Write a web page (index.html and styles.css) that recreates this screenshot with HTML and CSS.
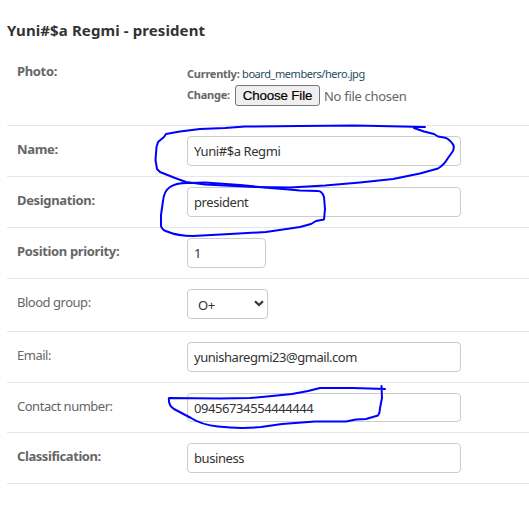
FILE: index.html
```html
<!DOCTYPE html>
<html lang="en">
<head>
<meta charset="utf-8">
<title>Board member</title>
<link rel="stylesheet" href="styles.css">
</head>
<body>
<main class="page">
  <h2 class="title">Yuni#$a Regmi - president</h2>
  <form class="form">
    <div class="row row-photo">
      <label class="label required">Photo:</label>
      <div class="upload">
        <div class="upload-current"><b>Currently:</b> <a class="link">board_members/hero.jpg</a></div>
        <div class="upload-change"><b>Change:</b><button type="button" class="file-button">Choose File</button><span class="file-name">No file chosen</span></div>
      </div>
    </div>
    <div class="row"><label class="label required">Name:</label><input class="field" value="Yuni#$a Regmi"></div>
    <div class="row"><label class="label required">Designation:</label><input class="field" value="president"></div>
    <div class="row"><label class="label required">Position priority:</label><input class="field field-small" value="1"></div>
    <div class="row row-select"><label class="label">Blood group:</label>
      <div class="field select"><span>O+</span><svg class="chevron" width="10" height="7" viewBox="0 0 10 7"><path d="M1 1.2 5 5 9 1.2"/></svg></div>
    </div>
    <div class="row"><label class="label">Email:</label><input class="field field-email" value="yunisharegmi23@gmail.com"></div>
    <div class="row row-contact"><label class="label">Contact number:</label><input class="field field-contact" value="09456734554444444"></div>
    <div class="row"><label class="label required classification">Classification:</label><input class="field" value="business"></div>
  </form>
  <svg class="marks" width="529" height="510" viewBox="0 0 529 510">
    <path d="M425 127 L355 125.5 L300 126 L245 126.5 L225 128 L200 129 L180 131.5 L166 134 L164 137 L158 142 L156.500 147 L155.500 160 L157 169 L160 172 L175 178 L186 182 L205 184.500 L255 187 L290 187.500 L325 185.500 L360 182.500 L393 179 L420 173.500 L438 168.500 Q444 165 448 158 L453 151 Q455 146 452 143 Q448 138 444 137.500 L438 136.500 L434 134 L424 131.500 L414 128"/>
    <path d="M190 183 Q176 182.500 170 187 Q164 191 163 201 L161 215 L161 226 Q162 230 167 231.500 Q178 236 193 236 L230 234 L266 232 L300 227 L311 224 L316 221 L324 219.500 L325 209 L324 197 Q322 191 318 191 L300 190.500 L283 189 L270 188 L240 185 L205 182.500 L190 183"/>
    <path d="M385 389 L353 388 L320 388 L308 391 L292 394 L272 396 L250 398 L220 398.500 L169 398 Q168 405 174 409 L191 418 Q202 425 218 426.500 Q240 429 261 427 L282 424 L315 421.500 L346 421.500 L356 419.500 L366 419 L378 415.500 Q380 413 380 408 L382 398 L381.500 386"/>
  </svg>
</main>
</body>
</html>
```
FILE: styles.css
```css
* { box-sizing: border-box; }
body { margin: 0; background: #fff; color: #333; font-family: "Noto Sans", "Open Sans", sans-serif; }
.page { position: relative; width: 529px; height: 510px; overflow: hidden; padding: 20px 0 0 7px; }
.title { margin: 0; height: 31px; font-size: 15px; line-height: 21px; font-weight: 700; letter-spacing: 0.1px; white-space: nowrap; }
.form { margin: 0; }
.row { display: flex; align-items: flex-start; height: 51px; padding: 10px 0 0 10px; border-bottom: 1px solid #e6e6e6; }
.row-photo { height: 75px; }
.row-select { height: 53px; }
.row-contact { height: 50px; }
.label { width: 170px; padding-top: 4px; font-size: 13px; line-height: 18px; letter-spacing: -0.48px; color: #666; white-space: nowrap; }
.row-photo .label { padding-top: 1px; }
.required { font-weight: 700; letter-spacing: -0.35px; }
.classification { letter-spacing: -0.42px; }
.field { width: 274px; height: 30px; margin: 0; padding: 0 6px; border: 1px solid #ccc; border-radius: 4px; background: #fff; color: #333; font: 13px "Noto Sans", sans-serif; letter-spacing: -0.42px; }
.field-small { width: 79px; }
.field-email { letter-spacing: -0.46px; }
.field-contact { height: 29px; }
.select { display: flex; align-items: center; justify-content: space-between; width: 81px; padding: 2px 3px 0 10px; }
.chevron { margin-top: -3px; fill: none; stroke: #333; stroke-width: 2.2; }
.upload { padding-top: 4px; font-size: 11px; line-height: 17px; color: #666; white-space: nowrap; }
.upload-current { letter-spacing: -0.25px; }
.link { color: #264b5d; letter-spacing: -0.45px; }
.upload-change { display: flex; margin-top: 3px; letter-spacing: -0.25px; }
.upload-change b { width: 48px; padding-top: 1px; }
.file-button { width: 85px; height: 21px; padding: 0; border: 1px solid #767676; border-radius: 3px; background: #efefef; color: #000; font: 13.333px "Liberation Sans", sans-serif; letter-spacing: -0.15px; -webkit-text-stroke: 0.2px #000; }
.file-name { margin-left: 4px; padding-top: 1px; font-size: 13px; line-height: 21px; letter-spacing: -0.3px; }
.marks { position: absolute; left: 0; top: 0; pointer-events: none; fill: none; stroke: #00f; stroke-width: 2; stroke-linecap: round; stroke-linejoin: round; }
```
